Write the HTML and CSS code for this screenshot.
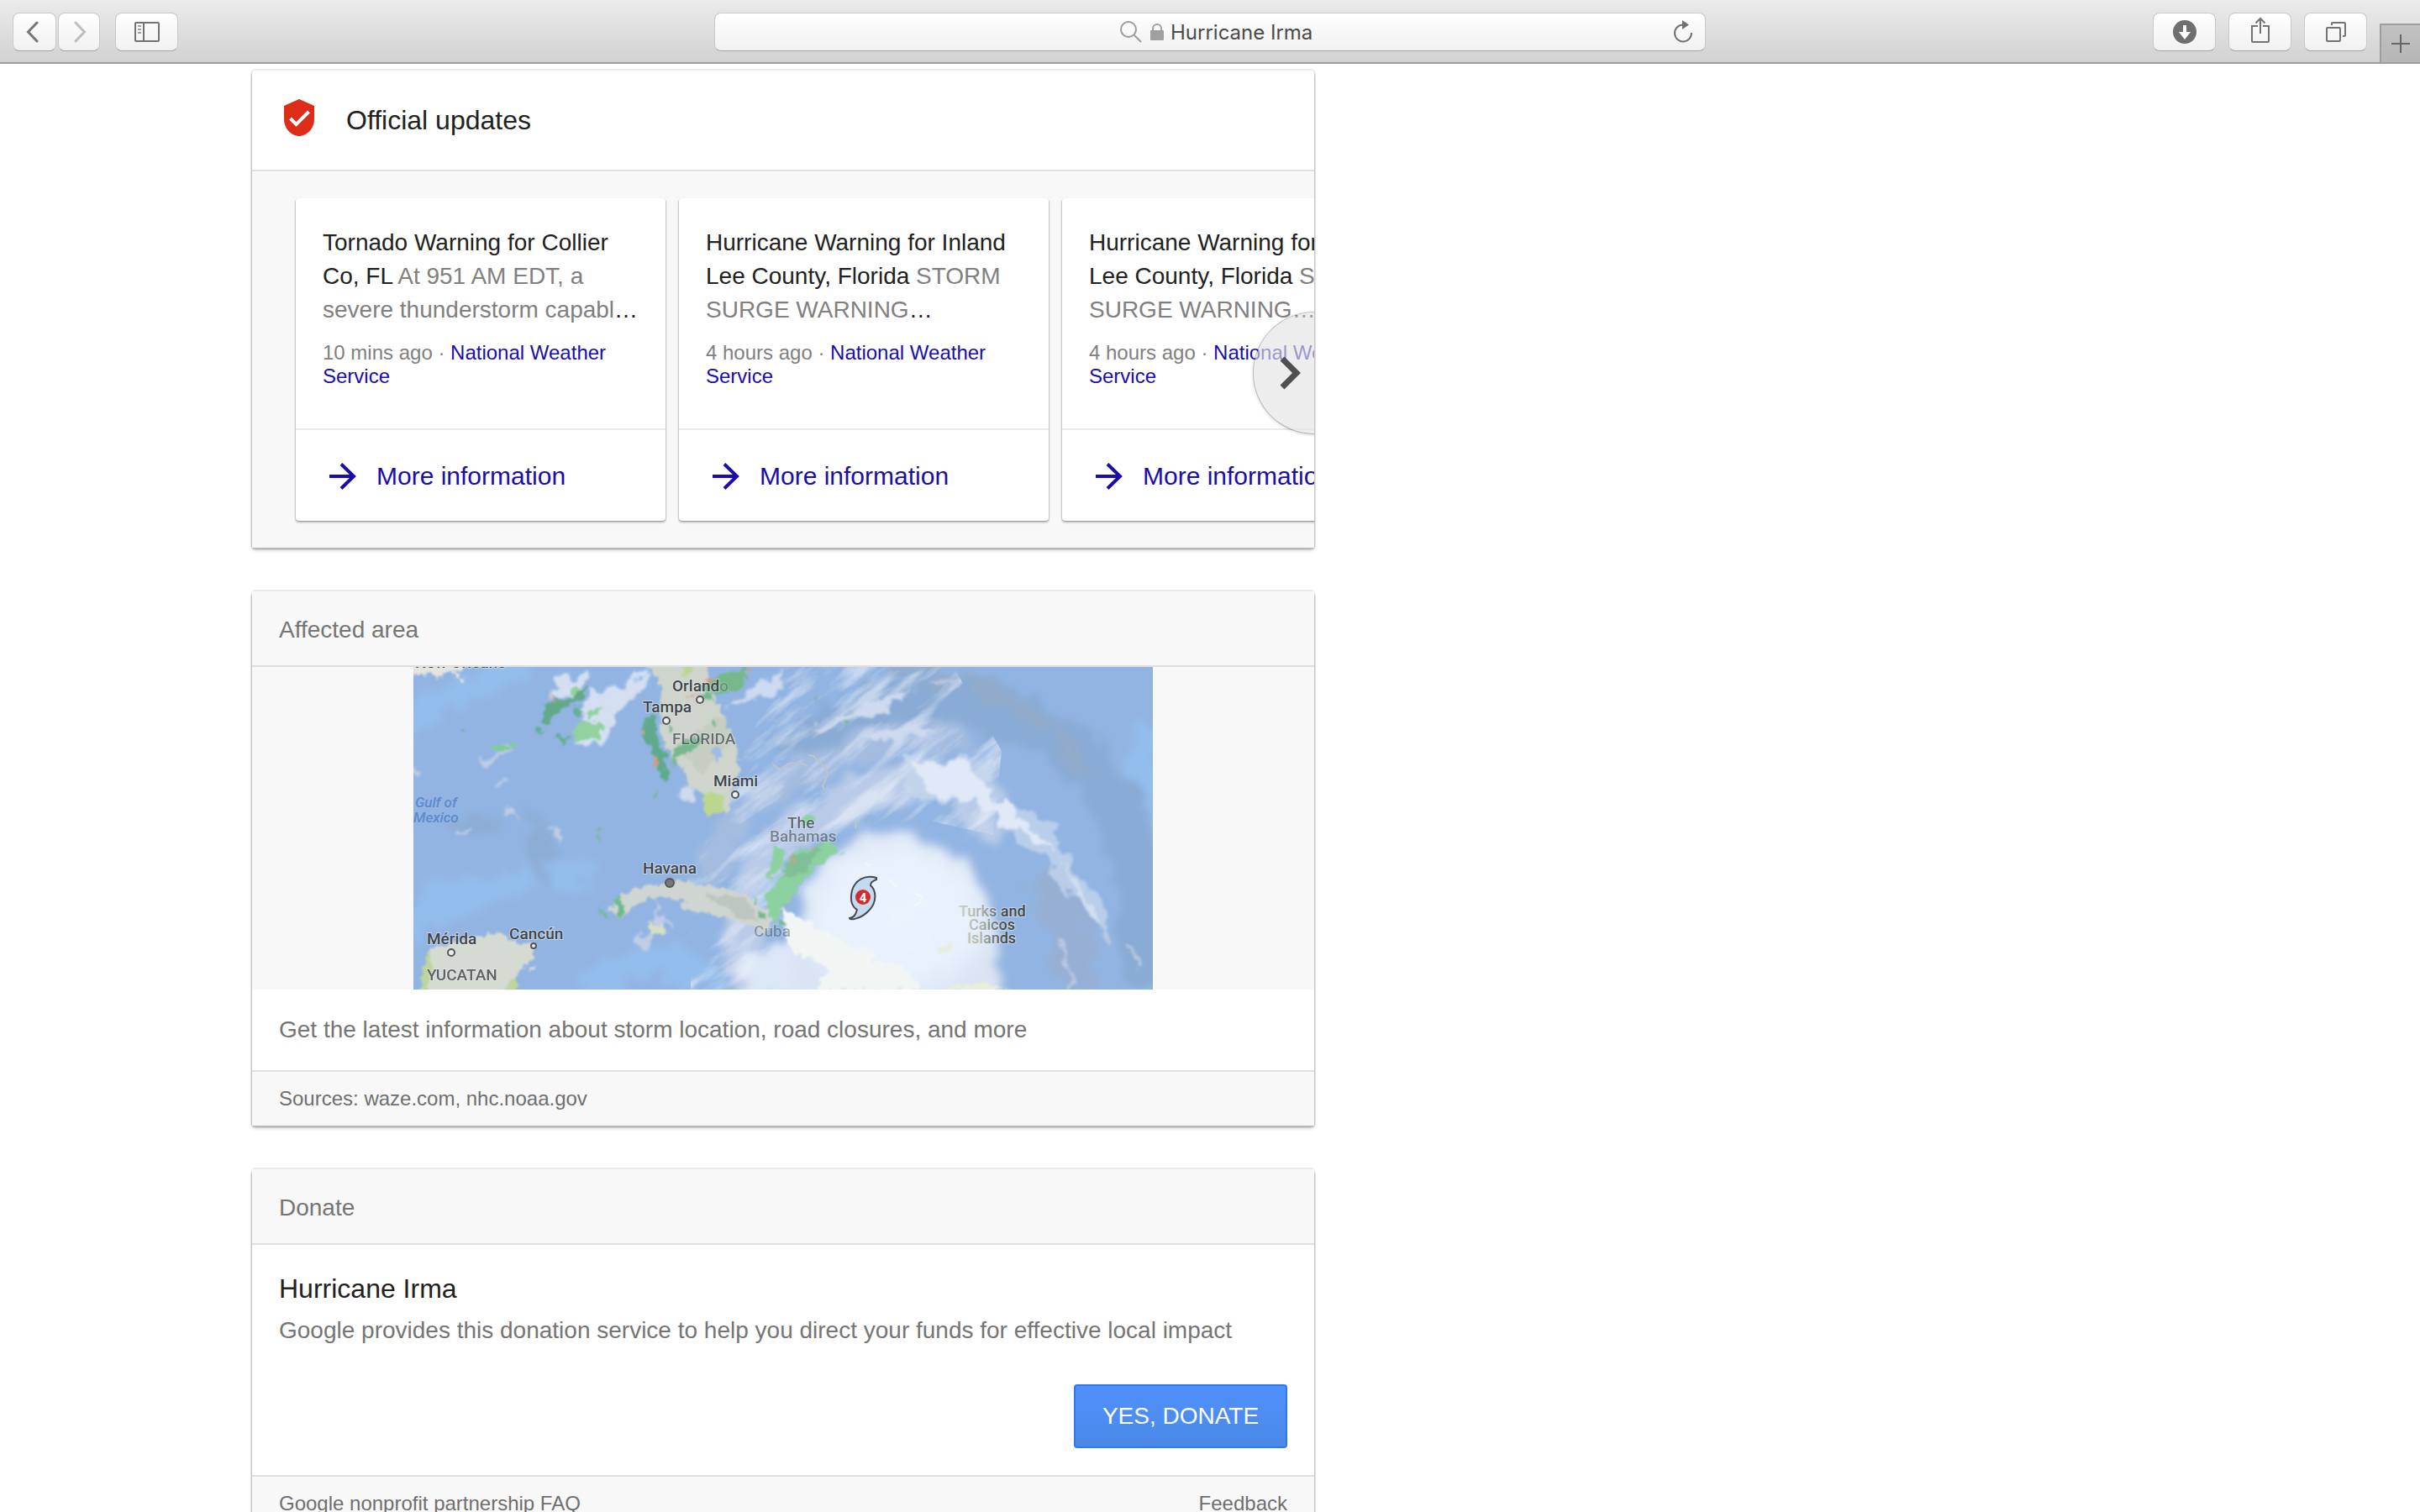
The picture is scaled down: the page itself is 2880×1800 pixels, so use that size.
FILE: index.html
```html
<!DOCTYPE html>
<html lang="en">
<head>
<meta charset="utf-8">
<title>Hurricane Irma</title>
<link rel="stylesheet" href="styles.css">
</head>
<body>
<div class="window">
  <header class="toolbar">
    <div class="toolbar-start">
      <div class="history">
        <button class="tool tool-back" type="button" aria-label="Back">
          <svg width="16" height="26" viewBox="0 0 16 26"><path d="M13 2 2.500 13 13 24" fill="none" stroke="#767676" stroke-width="3" stroke-linecap="round"/></svg>
        </button>
        <button class="tool tool-forward" type="button" aria-label="Forward">
          <svg width="16" height="26" viewBox="0 0 16 26"><path d="M3 2 13.500 13 3 24" fill="none" stroke="#bdbdbd" stroke-width="3" stroke-linecap="round"/></svg>
        </button>
      </div>
      <button class="tool" type="button" aria-label="Show sidebar">
        <svg width="30" height="24" viewBox="0 0 30 24"><rect x="1" y="1" width="28" height="22" rx="1" fill="none" stroke="#737373" stroke-width="2"/><path d="M11 1v22" stroke="#737373" stroke-width="2"/><path d="M4 5h4M4 9h4M4 13h4" stroke="#a0a0a0" stroke-width="2"/></svg>
      </button>
    </div>
    <form class="address">
      <label class="address-label" for="address" aria-label="Address">
        <svg width="26" height="26" viewBox="0 0 26 26"><circle cx="10" cy="10" r="9" fill="none" stroke="#9b9b9b" stroke-width="2"/><path d="m17 17 8 8" stroke="#9b9b9b" stroke-width="2"/></svg>
        <svg width="16" height="20" viewBox="0 0 16 20"><rect y="8" width="16" height="12" rx="1" fill="#9f9f9f"/><path d="M3 9V6a5 5 0 0 1 10 0v3" fill="none" stroke="#9f9f9f" stroke-width="2"/></svg>
      </label>
      <input class="address-input" id="address" type="text" value="Hurricane Irma">
      <button class="reload" type="button" aria-label="Reload">
        <svg width="24" height="28" viewBox="0 0 24 28"><path d="M11 5.500A10 10 0 1 0 22 15" fill="none" stroke="#6f6f6f" stroke-width="2"/><path d="M11 0v11l8-5.500z" fill="#6f6f6f"/></svg>
      </button>
    </form>
    <div class="toolbar-end">
      <button class="tool" type="button" aria-label="Downloads">
        <svg width="28" height="28" viewBox="0 0 28 28"><circle cx="14" cy="14" r="14" fill="#6f6f6f"/><path d="M12 6h4v8h5l-7 9-7-9h5z" fill="#fff"/></svg>
      </button>
      <button class="tool" type="button" aria-label="Share">
        <svg class="icon-raised" width="22" height="32" viewBox="0 0 22 32"><path d="M8 11H1v18q0 1 1 1h18q1 0 1-1V11h-7M11 20V2M5.500 7.500 11 2l5.500 5.500" fill="none" stroke="#737373" stroke-width="2"/></svg>
      </button>
      <button class="tool" type="button" aria-label="Show all tabs">
        <svg width="24" height="24" viewBox="0 0 24 24"><rect x="1" y="7" width="16" height="16" rx="1" fill="none" stroke="#737373" stroke-width="2"/><path d="M7 4V2q0-1 1-1h14q1 0 1 1v14q0 1-1 1h-2" fill="none" stroke="#737373" stroke-width="2"/></svg>
      </button>
      <button class="new-tab" type="button" aria-label="New tab">
        <svg width="22" height="22" viewBox="0 0 22 22"><path d="M11 0v22M0 11h22" stroke="#666" stroke-width="2"/></svg>
      </button>
    </div>
  </header>

  <main class="results">
    <section class="card">
      <div class="card-title">
        <svg width="48" height="50" viewBox="0 0 48 50"><path d="M24 0 42 8v16c0 10-7 18-15 19.500q-3 1-6 0C13 42 6 34 6 24V8z" fill="#dd2c17"/><path d="m13.500 23 7 7L35.500 15" fill="none" stroke="#fff" stroke-width="4"/></svg>
        <h2 class="heading">Official updates</h2>
      </div>
      <div class="carousel">
        <article class="update">
          <div class="update-body">
            <p class="update-text">Tornado Warning for Collier<br>Co, FL <span class="muted">At 951 AM EDT, a<br>severe thunderstorm capabl</span>…</p>
            <p class="update-meta">10 mins ago · <a href="#nws">National Weather Service</a></p>
          </div>
          <a class="update-more" href="#more-1"><svg width="32" height="32" viewBox="0 0 32 32"><path d="M0 16h29M14 1.500 29 16 14 30.500" fill="none" stroke="#1a0dab" stroke-width="4"/></svg>More information</a>
        </article>
        <article class="update">
          <div class="update-body">
            <p class="update-text">Hurricane Warning for Inland<br>Lee County, Florida <span class="muted">STORM<br>SURGE WARNING</span>…</p>
            <p class="update-meta">4 hours ago · <a href="#nws">National Weather Service</a></p>
          </div>
          <a class="update-more" href="#more-2"><svg width="32" height="32" viewBox="0 0 32 32"><path d="M0 16h29M14 1.500 29 16 14 30.500" fill="none" stroke="#1a0dab" stroke-width="4"/></svg>More information</a>
        </article>
        <article class="update">
          <div class="update-body">
            <p class="update-text">Hurricane Warning for Inland<br>Lee County, Florida <span class="muted">STORM<br>SURGE WARNING</span>…</p>
            <p class="update-meta">4 hours ago · <a href="#nws">National Weather Service</a></p>
          </div>
          <a class="update-more" href="#more-3"><svg width="32" height="32" viewBox="0 0 32 32"><path d="M0 16h29M14 1.500 29 16 14 30.500" fill="none" stroke="#1a0dab" stroke-width="4"/></svg>More information</a>
        </article>
        <button class="next" type="button" aria-label="Next updates">
          <svg width="26" height="40" viewBox="0 0 26 40"><path d="m4 3 17 17L4 37" fill="none" stroke="#505050" stroke-width="7"/></svg>
        </button>
      </div>
    </section>

    <section class="card">
      <h2 class="card-label">Affected area</h2>
      <div class="map-frame">
        <svg class="map" viewBox="0 0 880 384" role="img" aria-label="Storm map">
          <defs>
            <filter id="wisp" x="-20%" y="-20%" width="140%" height="140%"><feTurbulence type="fractalNoise" baseFrequency="0.05" numOctaves="5" seed="7"/><feDisplacementMap in="SourceGraphic" scale="30" xChannelSelector="R" yChannelSelector="G"/><feGaussianBlur stdDeviation="1.8"/></filter>
            <filter id="haze" x="-20%" y="-20%" width="140%" height="140%"><feTurbulence type="fractalNoise" baseFrequency="0.03" numOctaves="5" seed="3"/><feDisplacementMap in="SourceGraphic" scale="50" xChannelSelector="R" yChannelSelector="G"/><feGaussianBlur stdDeviation="4"/></filter>
            <filter id="soft" x="-20%" y="-20%" width="140%" height="140%"><feTurbulence type="fractalNoise" baseFrequency="0.04" numOctaves="4" seed="9"/><feDisplacementMap in="SourceGraphic" scale="24" xChannelSelector="R" yChannelSelector="G"/><feGaussianBlur stdDeviation="6"/></filter>
            <filter id="ragged" x="-20%" y="-20%" width="140%" height="140%"><feTurbulence type="fractalNoise" baseFrequency="0.12" numOctaves="3" seed="5"/><feDisplacementMap in="SourceGraphic" scale="12" xChannelSelector="R" yChannelSelector="G"/><feGaussianBlur stdDeviation="0.8"/></filter>
            <filter id="streaks" x="0" y="0" width="100%" height="100%"><feTurbulence type="fractalNoise" baseFrequency="0.012 0.05" numOctaves="5" seed="12"/><feColorMatrix values="0 0 0 0 .84  0 0 0 0 .89  0 0 0 0 .96  3.200 0 0 0 -1.500"/></filter>
            <radialGradient id="core"><stop offset="0" stop-color="#eaf3ff"/><stop offset=".7" stop-color="#e8f1fd"/><stop offset=".85" stop-color="#e1e9f7"/><stop offset="1" stop-color="#dbe4f4"/></radialGradient>
            <linearGradient id="fade" gradientUnits="userSpaceOnUse" x1="649" y1="0" x2="704" y2="0"><stop offset="0" stop-color="#c9cfc6"/><stop offset=".5" stop-color="#aab2b0"/><stop offset="1" stop-color="#40474c"/></linearGradient>
            <clipPath id="storm-bands"><path d="M330 250 440-5H640L700 100 690 200 600 180 470 250 400 384H330z"/></clipPath>
          </defs>
          <rect width="880" height="384" fill="#92b4e2"/>
          <g filter="url(#haze)" fill="none">
            <path d="M-10 70Q60 20 140-5M-10 310Q90 240 210 250M200 384Q300 320 350 384M880 70Q850 200 890 300" stroke="#93bdec" stroke-width="36"/>
            <path d="M440 110Q590-10 740 70T870 384" stroke="#8aabd5" stroke-width="58"/>
            <path d="M560 8Q720 0 800 130" stroke="#97abc8" stroke-width="14" opacity=".7"/>
            <path d="M750 250Q785 290 790 384" stroke="#98aed1" stroke-width="50" opacity=".8"/>
            <path d="M120 180Q170 190 150 260M40 190H100" stroke="#8baad0" stroke-width="20" opacity=".7"/>
            <path d="M350 260Q370 160 500 110T660 100" stroke="#a4bce0" stroke-width="34"/>
            <path d="M400 384Q350 230 520 160T680 200" stroke="#b9cbe8" stroke-width="42"/>
            <path d="M390 384Q430 320 520 330L600 384z" fill="#dce7f7" stroke="#dce7f7" stroke-width="24"/>
          </g>
          <g clip-path="url(#storm-bands)"><rect x="-100" y="-100" width="1000" height="700" transform="rotate(-38 440 200)" filter="url(#streaks)" opacity=".6"/></g>
          <g filter="url(#ragged)">
            <path d="M271-5 291 13 294 29 295 79 308 109 325 129 330 146 343 149 348 174 375 173 378 156 387 119 386 99 376 76 366 53 355 29 350-5z" fill="#cfd5cc"/>
            <path d="m310 95 60-38 9 30-36 40z" fill="#bfc8bb" opacity=".6"/>
            <path d="m343 149 28 3-2 20-21 4zM320-4l12 0 -4 18-8-6z" fill="#bdd68e"/>
            <path d="m353 101 9-6 7 9-8 8z" fill="#9dbbe5"/>
            <path d="m8 390 4-30 6-24 27-7 30-8 23-6 17 11 30 3-4 20-20 20v25z" fill="#d5dbd3"/>
            <path d="m12 360 6-25 4 20-4 30H8zM112 375l10-6v20h-14z" fill="#bdd699"/>
            <path d="m140 358 7-3-7 9zM-5-5h70l-8 9-20 1-8 10-10-8-18 4zM48 4l8 4-6 3zM56 12l5 4-5 3z" fill="#e3e5df"/>
            <path d="m231 289 17-16 23-12 27-2 17-5 40 7 40 8 16 17 27 0-20 32-7-7-30-10-30-7-36-8 12-7-39-6-23 10-20 16z" fill="#cfd5d0"/>
            <path d="m276 305 20 0 6 12-18 3z" fill="#d5dfc3"/>
            <path d="m345 270 50 4 16 30-25-6z" fill="#bec6c0"/>
          </g>
          <g filter="url(#soft)">
            <path d="M455 400Q440 300 478 250 510 196 565 194 630 200 668 246 696 290 700 400z" fill="url(#core)"/>
          </g>
          <g filter="url(#wisp)">
            <path d="m581 103 20 12 60-12 14 20 26 43 47 10 27 43 26 40 27 27 3 37-30-30-33-44-40-40-30-26-30-20-47-7-33 0z" fill="#c6d7ee" opacity=".75"/>
            <path d="m585 116 75-8 22 36 26 26 60 50-32-15-66-40-54-18z" fill="#dfe9f7"/>
            <path d="m770 226 26 44 30 48-34-34z" fill="#d2dff2"/>
            <path d="m161 38 16-22 28-8 8 10-25 18zM200 70l6-30 76-35-10 20-36 38-16 28-24 2z" fill="#d4e0f2"/>
            <path d="m82 108 18-5 20-5-8 8-24 8zM0 115l9 8-6 10zM51 192l12 2-4 6-8-3zM115 166l10 4 0 10-10-4zM165 195l12 2-6 12-10-4zM100 138h14v5h-14zM270 315l14 6-4 16-12-6zM288 284l12 8 0 16-14-8z" fill="#bfcee6"/>
            <path d="m375 50 20-20 50-30-10 18 10 6-40 14zM470 78l80-40 50-12-50 32zM525 90l40-20 70 2-38 10-50 8zM316 152l14-12 10 8-14 14z" fill="#cddaef"/>
            <path d="m768 330 10 20 4 34M850 330l15 30M820 310l15 20M612 16h40" stroke="#bac9e2" stroke-width="6" fill="none"/>
          </g>
          <g filter="url(#ragged)">
            <path d="m438 286 37 20 46 27 27 3-3 15 33 2 30 31H480l15-25-47-23z" fill="#f1f6f4"/>
            <path d="m620 336 16-4 6-6-4 12-14 2zM630 384l20-6 40 0 20 6z" fill="#e9eed8"/>
            <path d="m150 66 10-24 28-6 20-12-2 12-26 12-12 6-8 16z" fill="#62a889"/>
            <path d="m192 22 12 6-18 8zM192 68l14-4 20 6-4 14-30 4zM205 55l24-10-18 16z" fill="#91d29f"/>
            <path d="m170 80 16 4-6 6-12-4zM192 48l12 4-4 6-10-4zM147 74l8 0-6 6zM57 74h5v4h-5z" fill="#65ae91"/>
            <path d="m88 95 16-1 22-5-12 8-10 4z" fill="#7fce98"/>
            <path d="m274 65 12-10 4 30 10 20 2 32-6-4-10-30-14-20z" fill="#5eaa8d"/>
            <path d="m340 26 25-18 32-8-4 24-30 8zM310 95l32-16-2 14-24 14-8 12zM340 34l10-6 8 14zM300 66l10 6-4 6zM354 66l6-6-2 12z" fill="#76b88c"/>
            <path d="m421 269 17-20 13-30 24-3 20-10 8 10-15 18-20 12-13 23-20 20-3 16-8-8-5-14zM431 213l10 4-2 20-18 16 4-16zM463 178l14-2 2 8-16 4zM508 223l8-3-4 6z" fill="#8bd2a0"/>
            <path d="m438 250 12-26 20-4 16-8-16 28-22 12z" fill="#80bf97"/>
            <path d="m240 278 6-6 6 20-8 8zM219 285l12 10 0 6-10-8zM404 275l6 2-2 6zM412 290l8 8-6 2zM218 190l6 2-4 4zM222 198l4 8-6-2zM284 152l6-4 0 6zM477 35l4 4-4 2zM512 66l6-2-2 6zM434 302l8 0-2 6z" fill="#6fb98f"/>
            <path d="m158 32 10 4 2 6-8-6zM271 75l4 4-2 4zM286 105l5 6-2 12-4-6zM345 14l14 0-6 6zM325 36l16-4-8 6zM400 0l6 4-4 2zM450 222l4 10-4 4zM475 214l2 4-3 2z" fill="#d99a7e"/>
          </g>
          <g fill="none" stroke="#bcc5c9" stroke-width="2"><path d="m427 115 10 8 9-8 15-1 8 4M470 105l6 1 14 14 3 8-6 14 2 4M527 182l-1 10"/><path d="m538 233 6 4M566 252l8 10M595 269l10 4-2 8-8 4" stroke="#f6f8ef"/></g>
          <g class="place-dot"><circle cx="341" cy="39" r="4"/><circle cx="301" cy="64" r="4"/><circle cx="383" cy="152" r="4"/><circle cx="45" cy="340" r="4"/><circle cx="143" cy="332" r="3"/><circle cx="305" cy="257" r="5" fill="#777"/></g>
          <g class="place">
            <text x="2" y="1">New Orleans</text>
            <text x="308" y="29">Orland<tspan opacity=".3">o</tspan></text>
            <text x="273" y="54">Tampa</text>
            <text x="308" y="92" font-size="19" opacity=".7">FLORIDA</text>
            <text x="357" y="142">Miami</text>
            <text x="273" y="246">Havana</text>
            <text x="16" y="330">Mérida</text>
            <text x="114" y="324">Cancún</text>
            <text x="16" y="373" opacity=".8">YUCATAN</text>
            <text x="445" y="192" opacity=".75">The</text>
            <text x="424" y="208" opacity=".55">Bahamas</text>
            <text x="405" y="321" opacity=".4">Cuba</text>
          </g>
          <g class="place place-faded"><text x="649" y="297">Turks and</text><text x="661" y="313">Caicos</text><text x="659" y="329">Islands</text></g>
          <g class="sea"><text x="2" y="167">Gulf of</text><text x="0" y="185">Mexico</text></g>
          <path d="M551 251C538 247 526 253 522 266 519 279 523 286 528 289 526 296 524 298 519 299 519 302 533 300 542 290 552 280 551 266 544 260 544 256 547 255 551 253z" fill="#c5d9ef" stroke="#454a50" stroke-width="2"/>
          <circle cx="535" cy="274" r="9" fill="#d12d2d"/>
          <text class="storm-category" x="535" y="280">4</text>
        </svg>
      </div>
      <p class="caption">Get the latest information about storm location, road closures, and more</p>
      <footer class="card-footer"><span>Sources: waze.com, nhc.noaa.gov</span></footer>
    </section>

    <section class="card">
      <h2 class="card-label">Donate</h2>
      <div class="donate">
        <h3 class="heading">Hurricane Irma</h3>
        <p class="donate-text">Google provides this donation service to help you direct your funds for effective local impact</p>
        <button class="donate-button" type="button">YES, DONATE</button>
      </div>
      <footer class="card-footer"><a href="#faq">Google nonprofit partnership FAQ</a><a href="#feedback">Feedback</a></footer>
    </section>
  </main>
</div>
</body>
</html>
```
FILE: styles.css
```css
* { box-sizing: border-box; }
body {
  margin: 0;
  background: #fff;
  color: #212121;
  font-family: "Liberation Sans", Arial, sans-serif;
  font-size: 28px;
}
h2, h3, p { margin: 0; font-weight: 400; }
a { color: #1a0dab; text-decoration: none; }
button, input { font: inherit; margin: 0; padding: 0; border: 0; }
svg { display: block; flex: none; }

.window { display: flex; flex-direction: column; height: 100vh; overflow: hidden; }

/* Browser toolbar */
.toolbar {
  flex: none;
  display: grid;
  grid-template-columns: 1fr 41% 1fr;
  height: 76px;
  padding-top: 15px;
  border-bottom: 2px solid #9d9d9d;
  background: linear-gradient(#ebebeb, #d2d2d2);
}
.toolbar-start { display: flex; gap: 18px; padding-left: 15px; }
.history { display: flex; gap: 2px; }
.tool, .address {
  display: flex;
  align-items: center;
  justify-content: center;
  height: 46px;
  border: 1px solid #c9c9c9;
  border-bottom-color: #a3a3a3;
  border-radius: 8px;
  background: linear-gradient(#fff, #f1f1f1);
}
.tool { width: 75px; }
.tool-back { width: 52px; padding-right: 4px; }
.tool-forward { width: 50px; padding-left: 2px; }
.icon-raised { margin-bottom: 4px; }
.address { position: relative; margin: 0; padding-left: 14px; gap: 8px; }
.address-label { display: flex; align-items: center; gap: 10px; }
.address-input {
  width: 168px;
  background: none;
  color: #4a4a4a;
  font-family: Inter, sans-serif;
  font-size: 24px;
  outline: 0;
}
.reload { position: absolute; right: 14px; background: none; }
.toolbar-end { display: flex; justify-content: flex-end; gap: 15px; }
.new-tab {
  display: flex;
  align-items: center;
  justify-content: center;
  align-self: flex-end;
  width: 48px;
  height: 46px;
  border: solid #9d9d9d;
  border-width: 2px 0 0 2px;
  background: linear-gradient(#c2c2c2, #b6b6b6);
}

/* Result cards */
.results {
  display: flex;
  flex-direction: column;
  gap: 52px;
  width: 100%;
  max-width: 1564px;
  min-height: 0;
  padding: 8px 0 52px 300px;
}
.card {
  flex: none;
  border-radius: 4px;
  box-shadow: 0 0 0 2px rgba(0, 0, 0, .08), 0 2px 1px 1px rgba(0, 0, 0, .12), 0 4px 4px rgba(0, 0, 0, .12);
  background: #fff;
}
.card-title {
  display: flex;
  align-items: center;
  gap: 32px;
  height: 120px;
  padding: 0 32px;
  border-bottom: 2px solid #dfdfdf;
}
.heading { font-size: 32px; line-height: 40px; }
.card-label {
  padding: 28px 32px 24px;
  border-bottom: 2px solid #dfdfdf;
  background: #f8f8f8;
  color: #757575;
  font-size: 28px;
  line-height: 36px;
}
.card-footer {
  display: flex;
  align-items: center;
  justify-content: space-between;
  height: 66px;
  padding: 0 32px;
  border-top: 2px solid #dfdfdf;
  background: #f8f8f8;
  color: #6f6f6f;
  font-size: 24px;
}
.card-footer a { color: inherit; }

/* Updates carousel */
.carousel {
  position: relative;
  display: flex;
  gap: 16px;
  padding: 32px 0 32px 52px;
  overflow: hidden;
  background: #f8f8f8;
}
.update {
  flex: none;
  width: 440px;
  border-radius: 4px;
  background: #fff;
  box-shadow: -1px 1px 1px rgba(0, 0, 0, .12), 1px 1px 1px rgba(0, 0, 0, .12), 0 2px 3px rgba(0, 0, 0, .24);
}
.update-body {
  display: flex;
  flex-direction: column;
  gap: 17px;
  height: 276px;
  padding: 33px 0 0 32px;
  border-bottom: 2px solid #ebebeb;
}
.update-text { line-height: 40px; white-space: nowrap; }
.muted { color: #808080; }
.update-meta { padding-right: 32px; color: #808080; font-size: 24px; line-height: 28px; }
.update-more {
  display: flex;
  align-items: center;
  gap: 24px;
  height: 108px;
  padding: 2px 0 0 40px;
  font-size: 30px;
}
.next {
  position: absolute;
  top: 168px;
  right: -72px;
  display: flex;
  align-items: center;
  width: 144px;
  height: 144px;
  padding-left: 30px;
  border-radius: 50%;
  background: rgba(227, 227, 227, .64);
  box-shadow: 0 0 0 1px rgba(0, 0, 0, .2), 0 1px 4px rgba(0, 0, 0, .25);
}

/* Map */
.map-frame { display: flex; justify-content: center; background: #f8f8f8; }
.map { width: 880px; max-width: 100%; overflow: hidden; }
.place { fill: #3f454a; stroke: #e8eef2; stroke-width: 2px; stroke-opacity: .6; paint-order: stroke; font: 500 19px Roboto, sans-serif; }
.place-faded { fill: url(#fade); font-size: 18px; }
.place-dot { fill: #eee; stroke: #555; stroke-width: 2px; }
.sea { fill: #5c8bcb; font: italic 500 17px Roboto, sans-serif; }
.storm-category { fill: #fff; font: 700 15px Roboto, sans-serif; text-anchor: middle; }
.caption { padding: 30px 32px; color: #757575; line-height: 36px; }

/* Donation */
.donate { display: flex; flex-direction: column; padding: 32px 32px 32px; }
.donate-text { margin: 12px 0 46px; color: #757575; line-height: 36px; }
.donate-button {
  align-self: flex-end;
  width: 254px;
  height: 76px;
  border: 2px solid #3079ed;
  border-radius: 4px;
  background: linear-gradient(#5090fc, #4a89e8);
  color: #fff;
}
```
